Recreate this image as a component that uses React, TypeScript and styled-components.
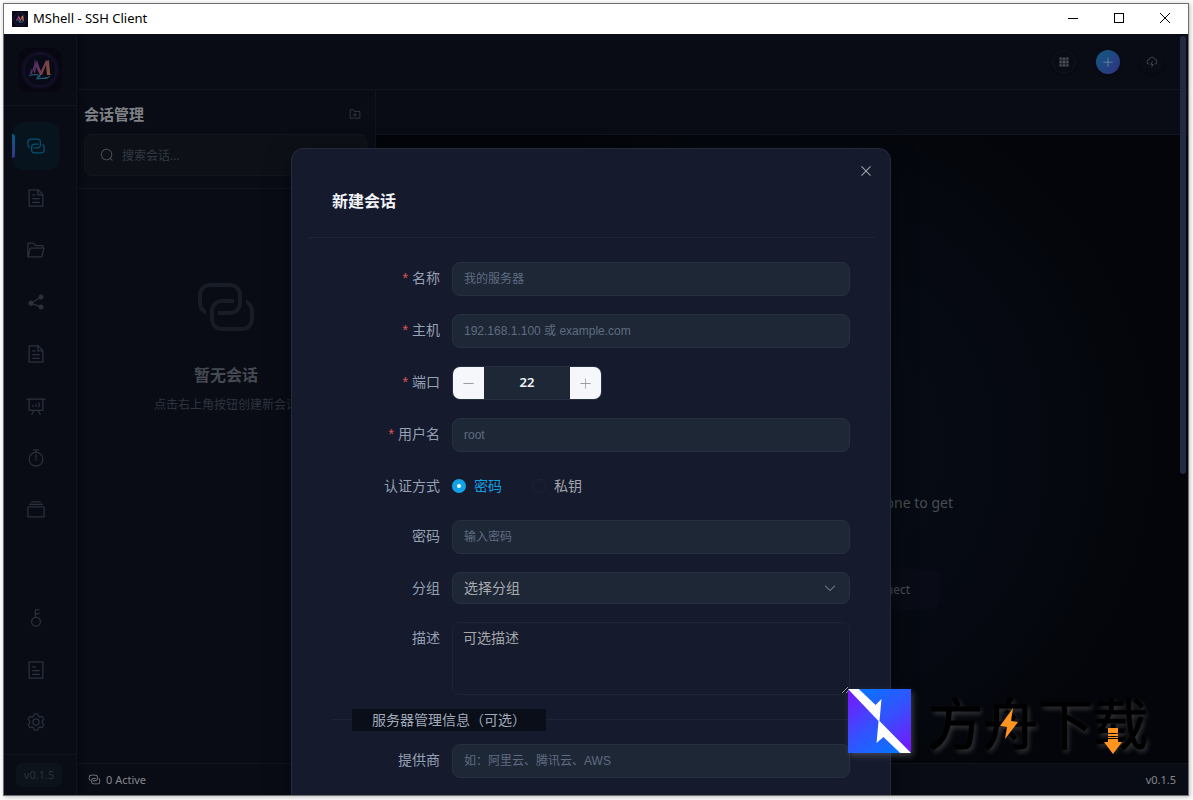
import React from 'react';
import styled, { createGlobalStyle, css } from 'styled-components';

const uiFont = '"Noto Sans", "Noto Sans CJK SC", sans-serif';
const fieldFont = '"Liberation Sans", "Noto Sans CJK SC", sans-serif';

const GlobalStyle = createGlobalStyle`
  * { box-sizing: border-box; }
  body { margin: 0; background: #fbfbfb; font-family: ${uiFont}; }
  button, input, select, textarea { margin: 0; padding: 0; border: 0; outline: 0; background: none; font-family: inherit; color: inherit; }
  h1, h2, h3, p { margin: 0; }
`;

/* ---------- icons ---------- */

const paths = {
  connection:
    'M640 384v64H448a128 128 0 0 0-128 128v128a128 128 0 0 0 128 128h320a128 128 0 0 0 128-128V576a128 128 0 0 0-64-110.848V394.88c74.56 26.368 128 97.472 128 181.056v128a192 192 0 0 1-192 192H448a192 192 0 0 1-192-192V576a192 192 0 0 1 192-192h192z M384 640v-64h192a128 128 0 0 0 128-128V320a128 128 0 0 0-128-128H256a128 128 0 0 0-128 128v128a128 128 0 0 0 64 110.848v70.272A192.064 192.064 0 0 1 64 448V320a192 192 0 0 1 192-192h320a192 192 0 0 1 192 192v128a192 192 0 0 1-192 192H384z',
  document:
    'M832 384H576V128H192v768h640V384zm-26.496-64L640 154.496V320h165.504zM160 64h480l256 256v608a32 32 0 0 1-32 32H160a32 32 0 0 1-32-32V96a32 32 0 0 1 32-32zm160 448h384v64H320v-64zm0-192h160v64H320v-64zm0 384h384v64H320v-64z',
  folder:
    'M878.08 448H241.92l-96 384h636.16l96-384zM832 384v-64H485.76L357.504 192H128v448l57.92-231.744A32 32 0 0 1 216.96 384H832zm-24.96 512H96a32 32 0 0 1-32-32V160a32 32 0 0 1 32-32h287.872l128.384 128H864a32 32 0 0 1 32 32v96h23.04a32 32 0 0 1 31.04 39.744l-112 448A32 32 0 0 1 807.04 896z',
  share:
    'm679.872 348.8-301.76 188.608a127.808 127.808 0 0 1 5.12 52.16l279.936 104.96a128 128 0 1 1-22.464 59.904l-279.872-104.96a128 128 0 1 1-16.64-166.272l301.696-188.608a128 128 0 1 1 33.92 54.272z',
  analysis:
    'm665.216 768 110.848 192h-73.856L591.36 768H433.024L322.176 960H248.32l110.848-192H160a32 32 0 0 1-32-32V192H64a32 32 0 0 1 0-64h896a32 32 0 1 1 0 64h-64v544a32 32 0 0 1-32 32H665.216zM832 192H192v512h640V192zM352 448a32 32 0 0 1 32 32v64a32 32 0 0 1-64 0v-64a32 32 0 0 1 32-32zm160-64a32 32 0 0 1 32 32v128a32 32 0 0 1-64 0V416a32 32 0 0 1 32-32zm160-64a32 32 0 0 1 32 32v192a32 32 0 1 1-64 0V352a32 32 0 0 1 32-32z',
  timer:
    'M512 896a320 320 0 1 0 0-640 320 320 0 0 0 0 640zm0 64a384 384 0 1 1 0-768 384 384 0 0 1 0 768z M512 320a32 32 0 0 1 32 32l-.512 224a32 32 0 1 1-64 0L480 352a32 32 0 0 1 32-32z M448 576a64 64 0 1 0 128 0 64 64 0 1 0-128 0zm96-448v128h-64V128h-96a32 32 0 0 1 0-64h256a32 32 0 1 1 0 64h-96z',
  files:
    'M128 384v448h768V384H128zm-32-64h832a32 32 0 0 1 32 32v512a32 32 0 0 1-32 32H96a32 32 0 0 1-32-32V352a32 32 0 0 1 32-32zm64-128h704v64H160zm96-128h512v64H256z',
  key:
    'M448 456.064V96a32 32 0 0 1 32-32.064L672 64a32 32 0 0 1 0 64H512v128h160a32 32 0 0 1 0 64H512v128a256 256 0 1 1-64 8.064zM512 896a192 192 0 1 0 0-384 192 192 0 0 0 0 384z',
  tickets:
    'M192 128v768h640V128H192zm-32-64h704a32 32 0 0 1 32 32v832a32 32 0 0 1-32 32H160a32 32 0 0 1-32-32V96a32 32 0 0 1 32-32zm160 448h384v64H320v-64zm0-192h192v64H320v-64zm0 384h384v64H320v-64z',
  setting:
    'M600.704 64a32 32 0 0 1 30.464 22.208l35.2 109.376c14.784 7.232 28.928 15.36 42.432 24.512l112.384-24.192a32 32 0 0 1 34.432 15.36L944.32 364.8a32 32 0 0 1-4.032 37.504l-77.12 85.12a357.12 357.12 0 0 1 0 49.024l77.12 85.248a32 32 0 0 1 4.032 37.504l-88.704 153.6a32 32 0 0 1-34.432 15.296L708.8 803.904c-13.44 9.088-27.648 17.28-42.368 24.512l-35.264 109.376A32 32 0 0 1 600.704 960H423.296a32 32 0 0 1-30.464-22.208L357.696 828.48a351.616 351.616 0 0 1-42.56-24.64l-112.32 24.256a32 32 0 0 1-34.432-15.36L79.68 659.2a32 32 0 0 1 4.032-37.504l77.12-85.248a357.12 357.12 0 0 1 0-48.896l-77.12-85.248A32 32 0 0 1 79.68 364.8l88.704-153.6a32 32 0 0 1 34.432-15.296l112.32 24.256c13.568-9.152 27.776-17.408 42.56-24.64l35.2-109.312A32 32 0 0 1 423.232 64H600.64zm-23.424 64H446.72l-36.352 113.088-24.512 11.968a294.113 294.113 0 0 0-34.816 20.096l-22.656 15.36-116.224-25.088-65.28 113.152 79.68 88.192-1.92 27.136a293.12 293.12 0 0 0 0 40.192l1.92 27.136-79.808 88.192 65.344 113.152 116.224-25.024 22.656 15.296a294.113 294.113 0 0 0 34.816 20.096l24.512 11.968L446.72 896h130.688l36.48-113.152 24.448-11.904a288.282 288.282 0 0 0 34.752-20.096l22.592-15.296 116.288 25.024 65.28-113.152-79.744-88.192 1.92-27.136a293.12 293.12 0 0 0 0-40.256l-1.92-27.136 79.808-88.128-65.344-113.152-116.288 24.96-22.592-15.232a287.616 287.616 0 0 0-34.752-20.096l-24.448-11.904L577.344 128zM512 320a192 192 0 1 1 0 384 192 192 0 0 1 0-384zm0 64a128 128 0 1 0 0 256 128 128 0 0 0 0-256z',
  folderAdd:
    'M128 192v640h768V320H485.76L357.504 192H128zm-32-64h287.872l128.384 128H928a32 32 0 0 1 32 32v576a32 32 0 0 1-32 32H96a32 32 0 0 1-32-32V160a32 32 0 0 1 32-32zm384 416V416h64v128h128v64H544v128h-64V608H352v-64h128z',
  search:
    'm795.904 750.72 124.992 124.928a32 32 0 0 1-45.248 45.248L750.656 795.904a416 416 0 1 1 45.248-45.248zM480 832a352 352 0 1 0 0-704 352 352 0 0 0 0 704z',
  grid:
    'M640 384v256H384V384h256zm64 0h192v256H704V384zm-64 512H384V704h256v192zm64 0V704h192v192H704zm-64-768v192H384V128h256zm64 0h192v192H704V128zM320 384v256H128V384h192zm0 512H128V704h192v192zm0-768v192H128V128h192z',
  plus:
    'M480 480V128a32 32 0 0 1 64 0v352h352a32 32 0 1 1 0 64H544v352a32 32 0 1 1-64 0V544H128a32 32 0 0 1 0-64h352z',
  minus: 'M128 544h768a32 32 0 1 0 0-64H128a32 32 0 0 0 0 64z',
  close:
    'M764.288 214.592 512 466.88 259.712 214.592a31.936 31.936 0 0 0-45.12 45.12L466.752 512 214.528 764.224a31.936 31.936 0 1 0 45.12 45.184L512 557.184l252.288 252.288a31.936 31.936 0 0 0 45.12-45.12L557.12 512.064l252.288-252.352a31.936 31.936 0 1 0-45.12-45.184z',
  arrowDown:
    'M831.872 340.864 512 652.672 192.128 340.864a30.592 30.592 0 0 0-42.752 0 29.12 29.12 0 0 0 0 41.6L489.664 714.24a32 32 0 0 0 44.672 0l340.288-331.712a29.12 29.12 0 0 0 0-41.728 30.592 30.592 0 0 0-42.752 0z',
  lightning:
    'M288 671.36v64.128A239.808 239.808 0 0 1 63.744 496.192a240.32 240.32 0 0 1 199.488-236.8 256.128 256.128 0 0 1 487.872-30.976A256.064 256.064 0 0 1 736 734.016v-64.768a192 192 0 0 0 3.328-377.92l-35.2-6.592-12.8-33.408a192.064 192.064 0 0 0-365.952 23.232l-9.92 40.896-41.472 7.04a176.32 176.32 0 0 0-146.24 173.568c0 91.968 70.464 167.36 160.256 175.232z M416 736a32 32 0 0 1-27.776-47.872l128-224a32 32 0 1 1 55.552 31.744L471.168 672H608a32 32 0 0 1 27.776 47.872l-128 224a32 32 0 1 1-55.68-31.744L552.96 736H416z',
};

type IconName = keyof typeof paths;

const Icon = ({ name, size }: { name: IconName; size: number }) => (
  <svg viewBox="0 0 1024 1024" width={size} height={size} fill="currentColor" aria-hidden="true">
    <path d={paths[name]} />
  </svg>
);

const AppLogo = ({ size, bright, id }: { size: number; bright?: boolean; id: string }) => (
  <svg viewBox="0 0 44 44" width={size} height={size} aria-hidden="true">
    <defs>
      <linearGradient id={`${id}-m`} x1="0" y1="0" x2="1" y2="0.4">
        <stop offset="0" stopColor={bright ? '#5a3ec0' : '#2c2060'} />
        <stop offset="0.5" stopColor={bright ? '#b65084' : '#5f3260'} />
        <stop offset="1" stopColor={bright ? '#e88f5a' : '#8a5038'} />
      </linearGradient>
      <radialGradient id={`${id}-r`}>
        <stop offset="0.74" stopColor="#080916" />
        <stop offset="0.84" stopColor={bright ? '#1c163e' : '#110e26'} />
        <stop offset="1" stopColor={bright ? '#0a0814' : '#080711'} />
      </radialGradient>
    </defs>
    <rect width="44" height="44" rx={bright ? 0 : 10} fill={bright ? '#0a0814' : '#080711'} />
    <circle cx="22" cy="22" r="20" fill={`url(#${id}-r)`} />
    <circle cx="22" cy="22" r="16" fill="#080a16" stroke={bright ? '#241d4e' : '#151230'} />
    <path
      fill={`url(#${id}-m)`}
      d="M12 26l1-6 1 3 2-6 1-7 1 5 1-3 3 9 1 2 5-11 1 1 2-1 1 14 2 1h-5l-1-10-4 10h-2l-4-8-1 7-2-4-1 4z"
    />
    <path
      fill="none"
      stroke={bright ? '#4a9ac0' : '#24566d'}
      strokeWidth="1.2"
      d="M11 27.5c6-1.500 12-.5 11 .5s-4 1-2 2 9 0 12-1.500M18 31c4-1 8 0 12-1"
    />
  </svg>
);

/* ---------- window frame ---------- */

const Desktop = styled.div`
  height: 100vh;
  padding: 3px 4px 4px 3px;
  overflow: hidden;
`;

const Window = styled.div`
  position: relative;
  display: flex;
  flex-direction: column;
  height: 100%;
  border: 1px solid #6f6f73;
  background: #090c15;
  box-shadow: 1px 1px 4px rgba(0, 0, 0, 0.25);
`;

const TitleBar = styled.header`
  display: flex;
  flex: 0 0 30px;
  align-items: center;
  gap: 5px;
  padding-left: 8px;
  background: #fff;
  color: #000;
`;

const TitleText = styled.h1`
  flex: 1;
  padding-bottom: 2px;
  font-size: 13px;
  font-weight: 400;
  line-height: 18px;
`;

const WindowButtons = styled.div`
  display: flex;
  align-self: stretch;
`;

const WindowButton = styled.button`
  display: grid;
  place-items: center;
  width: 46px;
  padding-bottom: 2px;
`;

const AppArea = styled.div`
  position: relative;
  display: flex;
  flex: 1;
  min-height: 0;
  overflow: hidden;
`;

/* ---------- sidebar ---------- */

const line = '#10141d';

const Sidebar = styled.aside`
  display: flex;
  flex: 0 0 73px;
  flex-direction: column;
  border-right: 1px solid ${line};
  background: #090c15;
  box-shadow: 2px 0 6px rgba(0, 0, 0, 0.35);
  z-index: 1;
`;

const LogoBox = styled.div`
  display: grid;
  flex: 0 0 72px;
  place-items: center;
  border-bottom: 1px solid ${line};
`;

const Nav = styled.nav`
  display: flex;
  flex: 1;
  flex-direction: column;
  gap: 4px;
  padding: 16px 0 8px 8px;
`;

const NavSpacer = styled.div`
  flex: 1;
`;

const NavButton = styled.button<{ $active?: boolean }>`
  position: relative;
  display: grid;
  flex: 0 0 48px;
  place-items: center;
  width: 48px;
  border-radius: 12px;
  color: #2a313d;
  ${(p) =>
    p.$active &&
    css`
      background: #07141e;
      color: #075071;
      &::before {
        content: '';
        position: absolute;
        left: 0;
        top: 12px;
        width: 3px;
        height: 24px;
        border-radius: 0 3px 3px 0;
        background: linear-gradient(#0a5c85, #33358a);
      }
    `}
`;

const SidebarFooter = styled.div`
  display: grid;
  flex: 0 0 41px;
  place-items: center;
  padding-right: 2px;
  border-top: 1px solid ${line};
`;

const VersionPill = styled.span`
  padding: 0 8px;
  border-radius: 6px;
  background: #0d131a;
  color: #2b323d;
  font-size: 11px;
  line-height: 24px;
`;

/* ---------- main column ---------- */

const MainColumn = styled.div`
  display: flex;
  flex: 1;
  flex-direction: column;
  min-width: 0;
`;

const TopBar = styled.div`
  display: flex;
  flex: 0 0 56px;
  align-items: center;
  justify-content: flex-end;
  gap: 20px;
  padding-right: 24px;
  border-bottom: 1px solid ${line};
`;

const RoundButton = styled.button<{ $kind: 'outline' | 'primary' | 'plain' }>`
  display: grid;
  place-items: center;
  width: 24px;
  height: 24px;
  border-radius: 50%;
  color: ${(p) => (p.$kind === 'primary' ? '#6f8fae' : '#4c4f56')};
  box-shadow: 0 1px 3px rgba(0, 0, 0, 0.4);
  ${(p) => p.$kind === 'outline' && 'border: 1px solid #10141d;'}
  ${(p) => p.$kind === 'primary' && 'background: linear-gradient(135deg, #0f5a80, #323180);'}
`;

const Workspace = styled.div`
  display: flex;
  flex: 1;
  min-height: 0;
`;

const SessionPanel = styled.section`
  display: flex;
  flex: 0 0 299px;
  flex-direction: column;
  border-right: 1px solid ${line};
`;

const PanelTop = styled.div`
  display: flex;
  flex-direction: column;
  gap: 8px;
  padding: 12px 8px 12px 7px;
  border-bottom: 1px solid ${line};
`;

const PanelHeading = styled.div`
  display: flex;
  align-items: center;
  justify-content: space-between;
  height: 24px;
  padding-right: 6px;
  color: #3a3f49;
`;

const PanelTitle = styled.h2`
  color: #7f8185;
  font-size: 15px;
  line-height: 24px;
`;

const IconButton = styled.button`
  display: grid;
  place-items: center;
`;

const SearchBox = styled.label`
  display: flex;
  align-items: center;
  gap: 8px;
  height: 42px;
  padding: 0 15px;
  border: 1px solid #12171e;
  border-radius: 8px;
  background: #0d1117;
  color: #4b505a;
`;

const SearchInput = styled.input`
  flex: 1;
  min-width: 0;
  font-size: 12px;
  &::placeholder { color: #323943; opacity: 1; }
`;

const EmptyState = styled.div`
  display: flex;
  flex-direction: column;
  align-items: center;
  padding-top: 86px;
  color: #181c26;
  white-space: nowrap;
`;

const EmptyTitle = styled.h3`
  margin-top: 24px;
  color: #454952;
  font-size: 16px;
  line-height: 24px;
`;

const EmptyHint = styled.p`
  margin-top: 8px;
  color: #2e343f;
  font-size: 12px;
  line-height: 20px;
`;

const Content = styled.main`
  display: flex;
  flex: 1;
  flex-direction: column;
  min-width: 0;
`;

const TabStrip = styled.div`
  flex: 0 0 45px;
  border-bottom: 1px solid ${line};
`;

const Welcome = styled.div`
  display: flex;
  flex: 1;
  flex-direction: column;
  align-items: center;
  justify-content: center;
  gap: 56px;
  padding-top: 204px;
  background: radial-gradient(circle at 50% 50%, #080d18 0, #05080f 300px, #04050a 370px);
`;

const WelcomeText = styled.p`
  width: 342px;
  color: #4a4d55;
  font-size: 14px;
  line-height: 20px;
  text-align: right;
`;

const WelcomeActions = styled.div`
  display: flex;
  justify-content: flex-end;
  width: 316px;
`;

const WelcomeButton = styled.button`
  height: 40px;
  padding: 0 30px;
  border-radius: 8px;
  background: #090c16;
  color: #4a4d55;
  font-size: 12px;
`;

const StatusBar = styled.footer`
  display: flex;
  flex: 0 0 32px;
  align-items: center;
  justify-content: space-between;
  padding: 0 12px 0 11px;
  border-top: 1px solid ${line};
  color: #85878b;
  font-size: 11px;
`;

const StatusItem = styled.span`
  display: flex;
  align-items: center;
  gap: 5px;
`;

/* ---------- dialog ---------- */

const Overlay = styled.div`
  position: absolute;
  inset: 0;
  z-index: 2;
  display: flex;
  align-items: flex-start;
  justify-content: center;
  padding: 114px 10px 0 0;
  overflow: hidden;
`;

const ScrollThumb = styled.div`
  position: absolute;
  top: 2px;
  right: 2px;
  width: 6px;
  height: 438px;
  border-radius: 3px;
  background: #222a40;
`;

const Dialog = styled.section`
  position: relative;
  width: 600px;
  max-width: 100%;
  padding: 16px;
  border: 1px solid #242b3b;
  border-radius: 12px;
  background: #151a2d;
  box-shadow: 0 8px 24px rgba(0, 0, 0, 0.5);
`;

const CloseButton = styled.button`
  position: absolute;
  top: 14px;
  right: 16px;
  display: grid;
  place-items: center;
  width: 16px;
  height: 16px;
  color: #a3a5ab;
`;

const DialogTitle = styled.h2`
  padding: 24px;
  border-bottom: 1px solid #1c2638;
  color: #f1f3f7;
  font-size: 16px;
  line-height: 24px;
`;

const Form = styled.form`
  padding: 24px;
`;

const Row = styled.div`
  display: flex;
  margin-bottom: 18px;
`;

const labelStyle = css`
  flex: 0 0 120px;
  padding-right: 12px;
  color: #94a0b3;
  font-size: 14px;
  line-height: 32px;
  text-align: right;
`;

const Label = styled.label<{ $required?: boolean }>`
  ${labelStyle}
  ${(p) =>
    p.$required &&
    css`
      &::before {
        content: '*';
        margin-right: 4px;
        color: #e0565b;
        font-family: "Liberation Sans", sans-serif;
      }
    `}
`;

const GroupLabel = styled.span`
  ${labelStyle}
`;

const boxStyle = css`
  border: 1px solid #263040;
  border-radius: 8px;
  background: #1e2736;
`;

const TextInput = styled.input`
  ${boxStyle}
  flex: 1;
  min-width: 0;
  height: 34px;
  padding: 0 11px;
  color: #e6e9ef;
  font-family: ${fieldFont};
  font-size: 12px;
  &::placeholder { color: #5f6c81; opacity: 1; }
`;

const Stepper = styled.div`
  ${boxStyle}
  display: flex;
  width: 150px;
  height: 34px;
  overflow: hidden;
`;

const StepButton = styled.button`
  display: grid;
  flex: 0 0 31px;
  place-items: center;
  background: #f5f7fa;
  color: #9a9da3;
`;

const StepValue = styled.input`
  flex: 1;
  min-width: 0;
  padding-bottom: 2px;
  color: #f1f3f7;
  font-size: 13px;
  font-weight: 600;
  text-align: center;
`;

const RadioGroup = styled.div`
  display: flex;
  gap: 30px;
`;

const RadioLabel = styled.label`
  display: flex;
  align-items: center;
  gap: 8px;
  height: 32px;
  color: #a3a6ad;
  font-size: 14px;
  line-height: 32px;
  &:has(input:checked) { color: #159fe3; }
`;

const Radio = styled.input`
  appearance: none;
  width: 14px;
  height: 14px;
  border: 1px solid #1d2536;
  border-radius: 50%;
  &:checked {
    border: 5px solid #12a2e8;
    background: #fff;
  }
`;

const SelectWrap = styled.div`
  position: relative;
  display: flex;
  flex: 1;
  color: #8d929b;
  svg {
    position: absolute;
    top: 9px;
    right: 13px;
    pointer-events: none;
  }
`;

const Select = styled.select`
  ${boxStyle}
  appearance: none;
  flex: 1;
  height: 32px;
  padding: 0 11px 2px;
  color: #a9abb0;
  font-size: 14px;
`;

const TextArea = styled.textarea`
  flex: 1;
  min-width: 0;
  height: 73px;
  padding: 4px 10px;
  border: 1px solid #1b2535;
  border-radius: 8px;
  color: #e6e9ef;
  font-size: 14px;
  line-height: 21px;
  resize: vertical;
  &::placeholder { color: #a4a6aa; opacity: 1; }
`;

const Divider = styled.div`
  display: flex;
  align-items: center;
  height: 1px;
  margin: 24px 0;
  &::before, &::after {
    content: '';
    flex: 0 0 20px;
    height: 1px;
    background: #1b2536;
  }
  &::after { flex: 1; }
`;

const DividerText = styled.span`
  padding: 0 20px;
  background: #0a0e19;
  color: #a0aaba;
  font-size: 14px;
  line-height: 22px;
`;

/* ---------- download site badge ---------- */

const Badge = styled.div`
  position: absolute;
  right: 40px;
  bottom: 42px;
  z-index: 3;
  display: flex;
  align-items: flex-start;
  gap: 17px;
  height: 64px;
  pointer-events: none;
`;

const BadgeMark = styled.svg`
  box-shadow: 2px 3px 6px rgba(120, 120, 120, 0.45);
`;

const BadgeName = styled.div`
  position: relative;
  color: #000;
  font-family: "Noto Sans CJK SC", sans-serif;
  font-size: 55px;
  line-height: 62px;
  -webkit-text-stroke: 1px #000;
  text-shadow: 2px 3px 5px rgba(140, 140, 140, 0.4);
  svg {
    position: absolute;
    top: 0;
    left: 0;
  }
`;

const navTop: { icon: IconName; label: string }[] = [
  { icon: 'connection', label: '会话' },
  { icon: 'document', label: '文档' },
  { icon: 'folder', label: '文件' },
  { icon: 'share', label: '转发' },
  { icon: 'document', label: '片段' },
  { icon: 'analysis', label: '监控' },
  { icon: 'timer', label: '任务' },
  { icon: 'files', label: '备份' },
];

const navBottom: { icon: IconName; label: string }[] = [
  { icon: 'key', label: '密钥' },
  { icon: 'tickets', label: '日志' },
  { icon: 'setting', label: '设置' },
];

const Field = ({ id, label, placeholder, required }: { id: string; label: string; placeholder: string; required?: boolean }) => (
  <Row>
    <Label htmlFor={id} $required={required}>{label}</Label>
    <TextInput id={id} placeholder={placeholder} />
  </Row>
);

export default function App() {
  return (
    <>
      <GlobalStyle />
      <Desktop>
        <Window>
          <TitleBar>
            <AppLogo size={16} bright id="title" />
            <TitleText>MShell - SSH Client</TitleText>
            <WindowButtons>
              <WindowButton aria-label="最小化">
                <svg width="10" height="10" stroke="#000"><path d="M0 5.5h10" /></svg>
              </WindowButton>
              <WindowButton aria-label="最大化">
                <svg width="10" height="10" fill="none" stroke="#000"><rect x="0.5" y="0.5" width="9" height="9" /></svg>
              </WindowButton>
              <WindowButton aria-label="关闭">
                <svg width="10" height="10" stroke="#000"><path d="M0 0l10 10M10 0L0 10" /></svg>
              </WindowButton>
            </WindowButtons>
          </TitleBar>

          <AppArea>
            <Sidebar>
              <LogoBox><AppLogo size={44} id="side" /></LogoBox>
              <Nav>
                {navTop.map((item, i) => (
                  <NavButton key={item.label} $active={i === 0} aria-label={item.label}>
                    <Icon name={item.icon} size={20} />
                  </NavButton>
                ))}
                <NavSpacer />
                {navBottom.map((item) => (
                  <NavButton key={item.label} aria-label={item.label}>
                    <Icon name={item.icon} size={20} />
                  </NavButton>
                ))}
              </Nav>
              <SidebarFooter><VersionPill>v0.1.5</VersionPill></SidebarFooter>
            </Sidebar>

            <MainColumn>
              <TopBar>
                <RoundButton $kind="outline" aria-label="布局"><Icon name="grid" size={12} /></RoundButton>
                <RoundButton $kind="primary" aria-label="新建"><Icon name="plus" size={12} /></RoundButton>
                <RoundButton $kind="plain" aria-label="快速连接"><Icon name="lightning" size={12} /></RoundButton>
              </TopBar>
              <Workspace>
                <SessionPanel>
                  <PanelTop>
                    <PanelHeading>
                      <PanelTitle>会话管理</PanelTitle>
                      <IconButton aria-label="新建分组"><Icon name="folderAdd" size={12} /></IconButton>
                    </PanelHeading>
                    <SearchBox>
                      <Icon name="search" size={14} />
                      <SearchInput aria-label="搜索会话" placeholder="搜索会话..." />
                    </SearchBox>
                  </PanelTop>
                  <EmptyState>
                    <Icon name="connection" size={64} />
                    <EmptyTitle>暂无会话</EmptyTitle>
                    <EmptyHint>点击右上角按钮创建新会话</EmptyHint>
                  </EmptyState>
                </SessionPanel>
                <Content>
                  <TabStrip />
                  <Welcome>
                    <WelcomeText>Select a session or create a new one to get</WelcomeText>
                    <WelcomeActions>
                      <WelcomeButton>Quick Connect</WelcomeButton>
                    </WelcomeActions>
                  </Welcome>
                </Content>
              </Workspace>
              <StatusBar>
                <StatusItem><Icon name="connection" size={13} />0 Active</StatusItem>
                <span>v0.1.5</span>
              </StatusBar>
            </MainColumn>

            <Overlay>
              <Dialog role="dialog" aria-labelledby="dialog-title">
                <CloseButton aria-label="关闭对话框"><Icon name="close" size={16} /></CloseButton>
                <DialogTitle id="dialog-title">新建会话</DialogTitle>
                <Form>
                  <Field id="name" label="名称" placeholder="我的服务器" required />
                  <Field id="host" label="主机" placeholder="192.168.1.100 或 example.com" required />
                  <Row>
                    <Label htmlFor="port" $required>端口</Label>
                    <Stepper>
                      <StepButton type="button" aria-label="减少"><Icon name="minus" size={13} /></StepButton>
                      <StepValue id="port" inputMode="numeric" defaultValue="22" />
                      <StepButton type="button" aria-label="增加"><Icon name="plus" size={13} /></StepButton>
                    </Stepper>
                  </Row>
                  <Field id="user" label="用户名" placeholder="root" required />
                  <Row role="radiogroup" aria-labelledby="auth-label">
                    <GroupLabel id="auth-label">认证方式</GroupLabel>
                    <RadioGroup>
                      <RadioLabel><Radio type="radio" name="auth" defaultChecked />密码</RadioLabel>
                      <RadioLabel><Radio type="radio" name="auth" />私钥</RadioLabel>
                    </RadioGroup>
                  </Row>
                  <Field id="password" label="密码" placeholder="输入密码" />
                  <Row>
                    <Label htmlFor="group">分组</Label>
                    <SelectWrap>
                      <Select id="group"><option>选择分组</option></Select>
                      <Icon name="arrowDown" size={14} />
                    </SelectWrap>
                  </Row>
                  <Row>
                    <Label htmlFor="desc">描述</Label>
                    <TextArea id="desc" placeholder="可选描述" />
                  </Row>
                  <Divider><DividerText>服务器管理信息（可选）</DividerText></Divider>
                  <Field id="provider" label="提供商" placeholder="如：阿里云、腾讯云、AWS" />
                </Form>
              </Dialog>
              <ScrollThumb />
            </Overlay>
          </AppArea>

          <Badge>
            <BadgeMark viewBox="0 0 64 64" width="63" height="64" preserveAspectRatio="none" aria-hidden="true">
              <defs>
                <linearGradient id="mark-up" x1="1" y1="1" x2="0.3" y2="0">
                  <stop offset="0" stopColor="#7d12ff" />
                  <stop offset="0.55" stopColor="#3550ff" />
                  <stop offset="1" stopColor="#0a72ff" />
                </linearGradient>
                <linearGradient id="mark-down" x1="0" y1="0" x2="0.7" y2="1">
                  <stop offset="0" stopColor="#7d12ff" />
                  <stop offset="0.55" stopColor="#3550ff" />
                  <stop offset="1" stopColor="#0a72ff" />
                </linearGradient>
              </defs>
              <path fill="url(#mark-up)" d="M0 0h64v64z" />
              <path fill="url(#mark-down)" d="M0 0v64h64z" />
              <path fill="#fff" d="M0 0h11l17 16 6-6-2 22 32 32H53L36 48l-7 6 2-22z" />
            </BadgeMark>
            <BadgeName>
              方舟下载
              <svg width="220" height="68" fill="#ff9420" aria-hidden="true">
                <path d="M85 19L72 37l7 1-2 12 13-17-7-1z" />
                <path d="M180 39h10v5h-10zM180 45h10v2h-10zM180 48h10v1h-10zM180 50h10v3h4l-9 12-9-12h4z" />
              </svg>
            </BadgeName>
          </Badge>
        </Window>
      </Desktop>
    </>
  );
}
